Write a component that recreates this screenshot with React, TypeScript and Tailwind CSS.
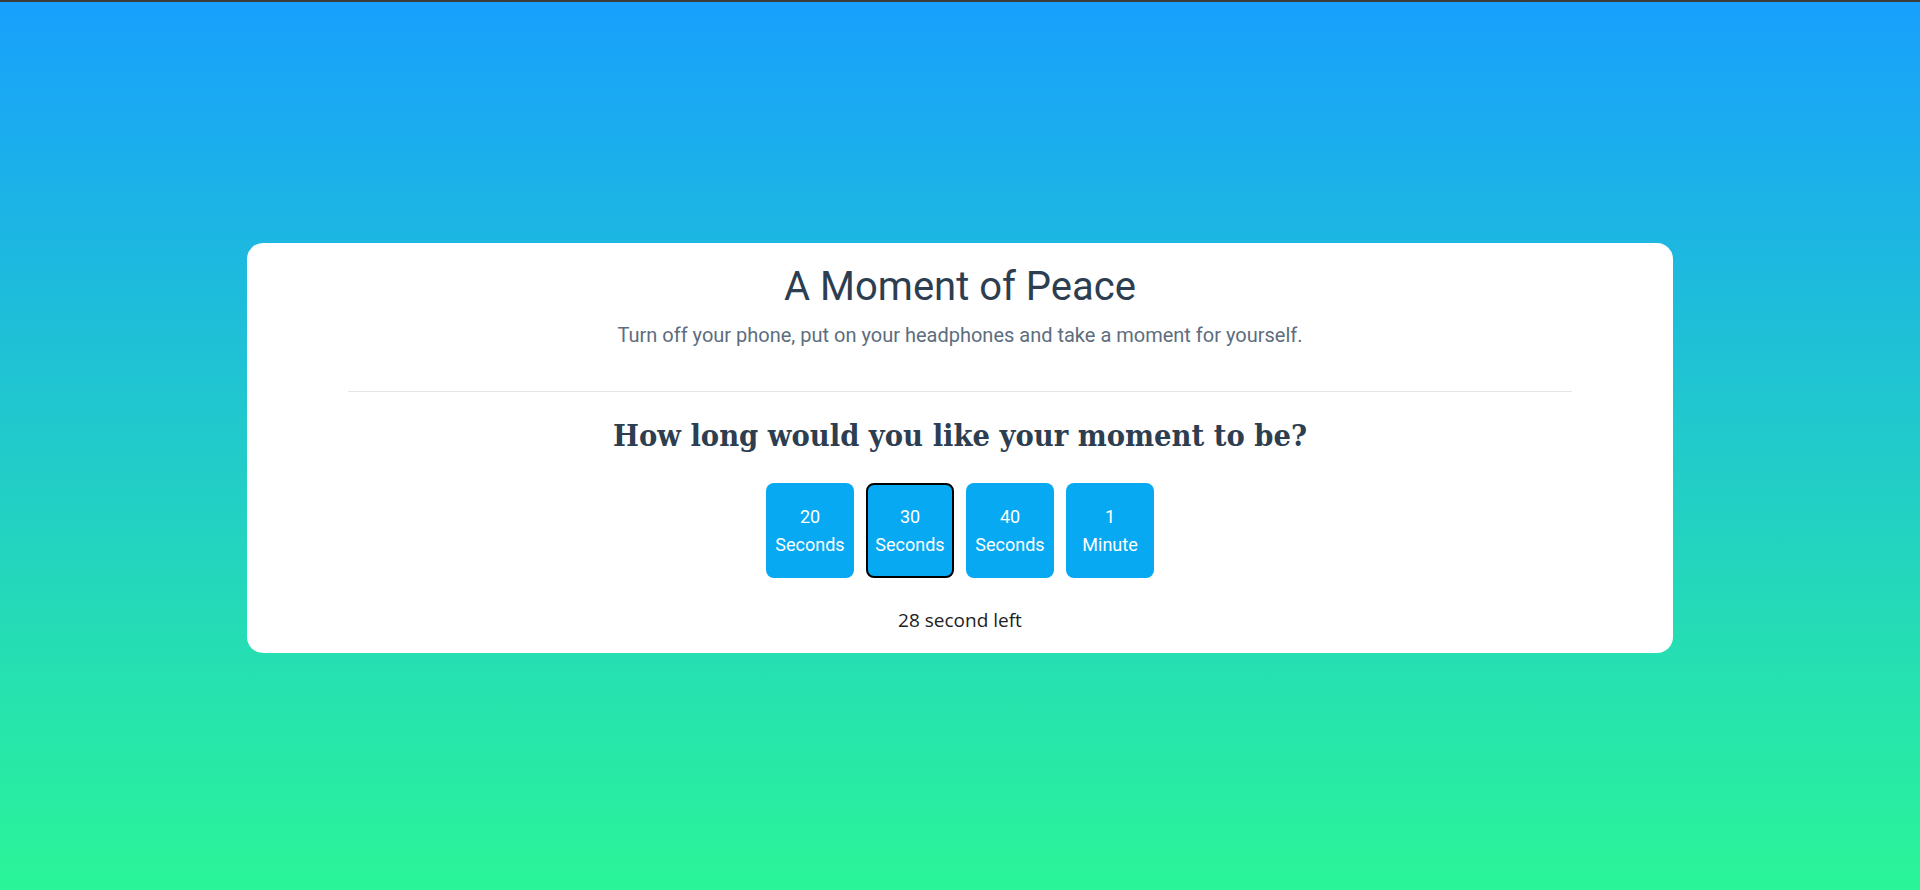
import React, { useState } from 'react';

const durations = [
  { value: '20', unit: 'Seconds' },
  { value: '30', unit: 'Seconds' },
  { value: '40', unit: 'Seconds' },
  { value: '1', unit: 'Minute' },
];

export default function App() {
  const [active, setActive] = useState(1);

  return (
    <div className="min-h-screen w-full border-t-2 border-[#3c3c3c] pt-[4px] bg-[linear-gradient(to_bottom,#18a0fd,#2af598)] flex items-center justify-center">
      <main className="w-[1426px] bg-white rounded-2xl pt-[20px] pb-[19px] flex flex-col items-center">
        {/* Intro */}
        <h1 className="font-['Roboto',sans-serif] text-[40px] leading-[48px] text-[#2c3e50] font-normal">
          A Moment of Peace
        </h1>
        <p className="font-['Roboto',sans-serif] text-[20px] leading-[28px] text-[#5d6d7e] mt-[10px]">
          Turn off your phone, put on your headphones and take a moment for yourself.
        </p>

        <hr className="w-[1224px] border-0 border-t border-[#e5e5e5] mt-[42px]" />

        {/* Duration picker */}
        <h2 className="font-['DejaVu_Serif_Condensed','DejaVu_Serif',serif] font-bold text-[30.5px] leading-[40px] text-[#2c3e50] mt-[23px]">
          How long would you like your moment to be?
        </h2>

        <div className="flex gap-3 mt-[28px]">
          {durations.map((d, i) => (
            <button
              key={i}
              onClick={() => setActive(i)}
              className={`w-[88px] h-[95px] rounded-lg bg-[#07a9f3] text-white font-['Roboto',sans-serif] text-[18px] leading-[28px] flex flex-col items-center justify-center ${
                i === active ? 'border-2 border-black' : 'border-2 border-transparent'
              }`}
            >
              <span>{d.value}</span>
              <span>{d.unit}</span>
            </button>
          ))}
        </div>

        <p className="font-['Open_Sans',sans-serif] text-[19px] leading-[28px] text-[#222] mt-[28px]">
          28 second left
        </p>
      </main>
    </div>
  );
}
